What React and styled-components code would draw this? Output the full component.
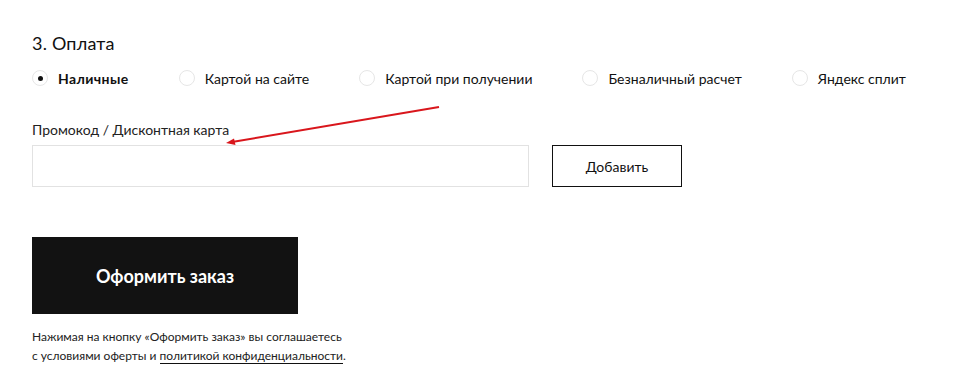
import React, { useState } from 'react';
import styled, { createGlobalStyle } from 'styled-components';

const GlobalStyle = createGlobalStyle`
  body {
    margin: 0;
    background: #fff;
    font-family: 'Lato', 'Noto Sans', sans-serif;
    color: #111;
  }
`;

const Page = styled.div`
  position: relative;
  width: 969px;
  height: 376px;
  padding: 32px 0 0 32px;
  box-sizing: border-box;
`;

const Title = styled.h2`
  margin: 0;
  font-size: 18px;
  font-weight: 400;
  line-height: 22px;
  letter-spacing: 0.2px;
`;

const RadioList = styled.div`
  display: flex;
  gap: 50px;
  margin-top: 14px;
  height: 20px;
  align-items: center;
`;

const RadioItem = styled.label`
  display: flex;
  align-items: center;
  gap: 10px;
  font-size: 14px;
  font-weight: ${p => (p.$checked ? 700 : 400)};
  letter-spacing: ${p => (p.$checked ? '0.4px' : '0')};
  cursor: pointer;
`;

const Circle = styled.span`
  width: 16px;
  height: 16px;
  border-radius: 50%;
  border: 1px solid #e6e6e6;
  box-sizing: border-box;
  display: flex;
  align-items: center;
  justify-content: center;

  &::after {
    content: '';
    width: 5px;
    height: 5px;
    border-radius: 50%;
    background: ${p => (p.$checked ? '#111' : 'transparent')};
  }
`;

const Label = styled.div`
  margin-top: 33px;
  font-size: 14px;
  line-height: 18px;
  color: #222;
`;

const PromoRow = styled.div`
  display: flex;
  gap: 23px;
  margin-top: 6px;
`;

const Input = styled.input`
  width: 497px;
  height: 42px;
  box-sizing: border-box;
  border: 1px solid #e2e2e2;
  outline: none;
  padding: 0 14px;
  font: inherit;
`;

const AddButton = styled.button`
  width: 130px;
  height: 42px;
  box-sizing: border-box;
  border: 1px solid #111;
  background: #fff;
  font-family: inherit;
  font-size: 14px;
  color: #111;
  cursor: pointer;
`;

const SubmitButton = styled.button`
  display: block;
  margin-top: 50px;
  width: 266px;
  height: 77px;
  border: none;
  background: #121212;
  color: #fff;
  font-family: inherit;
  font-size: 18px;
  font-weight: 700;
  cursor: pointer;
`;

const Note = styled.p`
  margin: 13px 0 0;
  font-size: 12px;
  line-height: 19px;
  color: #222;
`;

const Link = styled.a`
  color: inherit;
  text-decoration: none;
  border-bottom: 1px solid #111;
`;

const Arrow = styled.svg`
  position: absolute;
  left: 0;
  top: 0;
  pointer-events: none;
`;

const options = [
  'Наличные',
  'Картой на сайте',
  'Картой при получении',
  'Безналичный расчет',
  'Яндекс сплит',
];

export default function App() {
  const [selected, setSelected] = useState(0);
  return (
    <Page>
      <GlobalStyle />
      <Title>3. Оплата</Title>
      <RadioList>
        {options.map((o, i) => (
          <RadioItem key={o} $checked={selected === i} onClick={() => setSelected(i)}>
            <Circle $checked={selected === i} />
            {o}
          </RadioItem>
        ))}
      </RadioList>
      <Label>Промокод / Дисконтная карта</Label>
      <PromoRow>
        <Input />
        <AddButton>Добавить</AddButton>
      </PromoRow>
      <SubmitButton>Оформить заказ</SubmitButton>
      <Note>
        Нажимая на кнопку «Оформить заказ» вы соглашаетесь
        <br />с условиями оферты и <Link href="#">политикой конфиденциальности</Link>.
      </Note>
      <Arrow width="969" height="376">
        <line x1="439" y1="107" x2="232" y2="142" stroke="#d9161c" strokeWidth="2" />
        <polygon points="226,143 234,138.5 235.5,145" fill="#d9161c" />
      </Arrow>
    </Page>
  );
}
